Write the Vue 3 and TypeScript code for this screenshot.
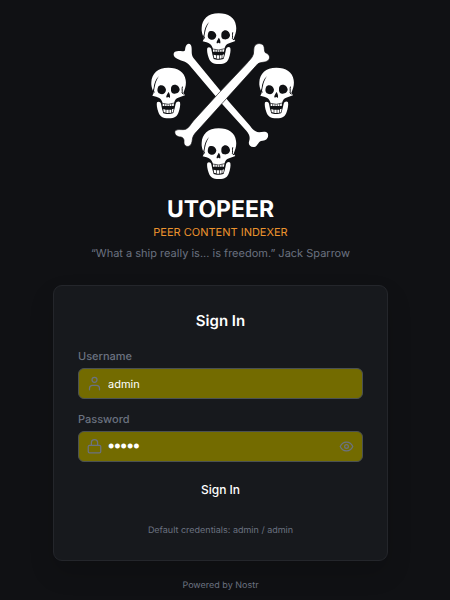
<script setup lang="ts">
import { ref } from 'vue'

interface Position {
  x: number
  y: number
}

const skulls: Position[] = [
  { x: 149, y: 0 },
  { x: -2, y: 163 },
  { x: 322, y: 163 },
  { x: 149, y: 345 },
]

const username = ref('admin')
const password = ref('admin')
const showPassword = ref(false)
</script>

<template>
  <main class="page">
    <header class="brand">
      <svg class="emblem" viewBox="0 0 480 540" role="img" aria-label="Utopeer skulls and crossbones">
        <defs>
          <g id="skull">
            <path fill="#fff" d="M84 25C52 25 34 43 33 69C32 78 35 88 38 95L40 101L36 109C43 112 53 112 58 117C63 121 65 126 67 132L67 140L100 140L101 132C103 126 104 121 110 117C117 113 126 112 134 108L129 101L132 93C136 83 138 72 136 62C133 38 113 25 84 25Z" />
            <path fill="#fff" d="M50 129C54 125 61 127 62 133L65 148L69 162C76 165 91 165 99 161L103 147L106 133C108 126 116 124 119 129C121 137 118 150 115 158C111 171 103 177 85 177C66 177 58 170 54 158C50 147 48 135 50 129Z" />
            <path fill="#fff" d="M69 149L76 151L76 160L70 158ZM78 151H85V161H78ZM87 151H93V160L87 161ZM95 150L100 148L98 158L95 160Z" />
            <path fill="none" stroke="#101114" stroke-width="2" d="M73 133V141M80 135V141M87 135V141M94 133V141M66 132Q84 138 102 131" />
            <path fill="#101114" d="M57 79C66 75 76 82 77 91C77 100 69 106 61 104C52 102 50 95 52 87C53 83 54 80 57 79Z" />
            <path fill="#101114" d="M99 77C108 73 117 81 118 90C118 99 110 104 101 103C94 102 91 97 92 89C92 83 94 79 99 77Z" />
            <path fill="#101114" d="M84 98C88 101 90 109 89 115C86 116 85 113 83 113C80 116 77 115 78 111C79 106 82 103 84 98Z" />
            <path fill="#101114" d="M56 50C46 59 41 73 40 86L37 95L41 101L43 99L41 94C44 80 45 66 56 50Z" />
            <path fill="none" stroke="#101114" stroke-width="3" stroke-linecap="round" d="M126 83C124 90 127 95 125 101L129 104" />
          </g>
        </defs>
        <path fill="#fff" d="M133 128C136 114 149 113 151 124C154 136 149 148 158 160L243 263L262 288L327 362C332 370 337 375 344 379C355 386 372 375 380 385C385 396 376 408 364 407C352 407 352 420 343 425C330 429 321 420 324 410C329 396 324 386 316 377L240 293L226 276L148 184C136 168 124 169 110 162C98 158 94 146 102 140C112 136 122 140 130 138C133 136 132 132 133 128Z" />
        <path fill="#fff" stroke="#101114" stroke-width="2" d="M339 128C342 114 360 112 368 122C371 128 369 138 373 143C386 147 389 158 382 166C372 175 360 169 350 177L257 280L174 372C165 382 158 388 155 398C153 407 154 415 147 422C139 428 127 422 129 410C130 402 126 398 120 396C110 396 99 389 102 379C108 370 122 376 134 373C143 369 149 358 157 348L230 268L315 178C325 166 333 160 337 148C339 142 337 135 339 128Z" />
        <use v-for="(skull, index) in skulls" :key="index" href="#skull" :x="skull.x" :y="skull.y" />
      </svg>
      <h1>UTOPEER</h1>
      <p class="tagline">PEER CONTENT INDEXER</p>
      <p class="quote">“What a ship really is... is freedom.” Jack Sparrow</p>
    </header>

    <section class="card">
      <h2>Sign In</h2>
      <form @submit.prevent>
        <div class="group">
          <label for="username">Username</label>
          <div class="field">
            <svg class="icon" viewBox="0 0 24 24" aria-hidden="true">
              <circle cx="12" cy="6" r="4" />
              <path d="M4 22v-2a5 5 0 0 1 5-5h6a5 5 0 0 1 5 5v2" />
            </svg>
            <input id="username" v-model="username" type="text" autocomplete="username">
          </div>
        </div>
        <div class="group">
          <label for="password">Password</label>
          <div class="field">
            <svg class="icon" viewBox="0 0 24 24" aria-hidden="true">
              <rect x="2" y="10" width="20" height="12" rx="2" />
              <path d="M7 10V6a5 5 0 0 1 10 0v4" />
            </svg>
            <input id="password" v-model="password" :type="showPassword ? 'text' : 'password'" autocomplete="current-password">
            <button class="toggle" type="button" :aria-label="showPassword ? 'Hide password' : 'Show password'" @click="showPassword = !showPassword">
              <svg class="icon" viewBox="0 0 24 24" aria-hidden="true">
                <path d="M2 12s3-7 10-7 10 7 10 7-3 7-10 7S2 12 2 12Z" />
                <circle cx="12" cy="12" r="3" />
              </svg>
            </button>
          </div>
        </div>
        <button class="submit" type="submit">Sign In</button>
      </form>
      <p class="hint">Default credentials: admin / admin</p>
    </section>
    <footer>Powered by Nostr</footer>
  </main>
</template>

<style>
body {
  margin: 0;
  background: #101114;
}
</style>

<style scoped>
* {
  box-sizing: border-box;
}

.page {
  min-height: 100vh;
  padding: 5px 62px 0 53px;
  display: flex;
  flex-direction: column;
  color: #fff;
  font-family: Inter, "Liberation Sans", sans-serif;
  font-size: 11px;
  line-height: 16px;
  text-align: center;
  text-rendering: geometricPrecision;
}

h1,
h2,
p {
  margin: 0;
}

.brand {
  display: flex;
  flex-direction: column;
  align-items: center;
}

.emblem {
  display: block;
  width: 160px;
  height: 180px;
}

h1 {
  margin-top: 10px;
  font-size: 23px;
  line-height: 28px;
  font-weight: 700;
}

.tagline {
  margin-top: 1px;
  color: #ec932e;
}

.quote {
  margin-top: 5px;
  color: #6b7280;
}

.card {
  margin-top: 24px;
  padding: 24px 24px 22px;
  border: 1px solid #24262b;
  border-radius: 9px;
  background: #17191d;
  box-shadow: 0 12px 24px rgba(0, 0, 0, 0.15);
}

h2 {
  font-size: 15px;
  line-height: 22px;
  font-weight: 600;
}

form {
  margin-top: 16px;
  display: flex;
  flex-direction: column;
  gap: 12px;
}

.group {
  display: flex;
  flex-direction: column;
  gap: 4px;
  text-align: left;
}

label {
  color: #6b7280;
  font-weight: 500;
}

.field {
  display: flex;
  align-items: center;
  height: 31px;
  padding: 0 8px;
  border: 1px solid #4b5152;
  border-radius: 6px;
  background: #736b00;
}

.icon {
  display: block;
  flex: none;
  width: 15px;
  height: 15px;
  fill: none;
  stroke: #6b7280;
  stroke-width: 2;
  stroke-linecap: round;
  stroke-linejoin: round;
}

input {
  flex: 1;
  min-width: 0;
  height: 28px;
  padding: 0 6px;
  border: 0;
  outline: 0;
  background: transparent;
  color: #fff;
  font: inherit;
  text-rendering: inherit;
}

input[type="password"] {
  font-family: "Liberation Sans", sans-serif;
  font-size: 18px;
}

button {
  padding: 0;
  border: 0;
  background: transparent;
  color: #fff;
  font: inherit;
  cursor: pointer;
}

.submit {
  height: 32px;
  font-size: 12px;
  font-weight: 500;
}

.hint,
footer {
  color: #6b7280;
  font-size: 9px;
  line-height: 14px;
}

.hint {
  margin-top: 18px;
}

footer {
  margin-top: 18px;
}
</style>
